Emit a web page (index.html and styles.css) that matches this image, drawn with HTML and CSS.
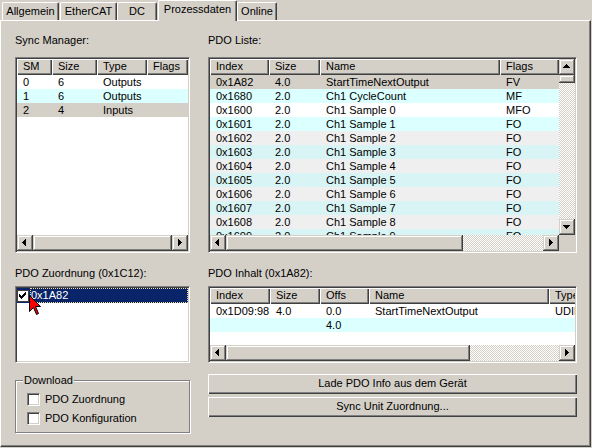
FILE: index.html
```html
<!DOCTYPE html>
<html>
<head>
<meta charset="utf-8">
<title>Prozessdaten</title>
<link rel="stylesheet" href="styles.css">
</head>
<body>
<div class="tabs">
  <div class="tab tab-allg">Allgemein</div>
  <div class="tab tab-ecat">EtherCAT</div>
  <div class="tab tab-dc">DC</div>
  <div class="tab tab-proz active">Prozessdaten</div>
  <div class="tab tab-online">Online</div>
</div>
<div class="panel">
  <div class="col col-left">
    <div class="label">Sync Manager:</div>
    <div class="lv lv-sm">
      <div class="lv-main">
        <div class="hrow sm-cols">
          <div class="hc">SM</div><div class="hc">Size</div><div class="hc">Type</div><div class="hc">Flags</div>
        </div>
        <div class="lv-body">
          <div class="row sm-cols r-white"><div class="c">0</div><div class="c">6</div><div class="c">Outputs</div><div class="c"></div></div>
          <div class="row sm-cols r-cyan"><div class="c">1</div><div class="c">6</div><div class="c">Outputs</div><div class="c"></div></div>
          <div class="row sm-cols r-gray"><div class="c">2</div><div class="c">4</div><div class="c">Inputs</div><div class="c"></div></div>
        </div>
      </div>
      <div class="hscroll">
        <div class="sbtn"><svg width="16" height="16" viewBox="0 0 16 16"><path d="M5 7h1v1H5z M6 6h1v3H6z M7 5h1v5H7z M8 4h1v7H8z"/></svg></div>
        <div class="thumb thumb-sm"></div>
        <div class="track"></div>
        <div class="sbtn"><svg width="16" height="16" viewBox="0 0 16 16"><path d="M6 4h1v7H6z M7 5h1v5H7z M8 6h1v3H8z M9 7h1v1H9z"/></svg></div>
      </div>
    </div>
    <div class="label label2">PDO Zuordnung (0x1C12):</div>
    <div class="lb">
      <div class="lb-item">
        <span class="lb-cb"><svg width="12" height="12" viewBox="0 0 12 12"><path d="M8 2h1v1H8z M7 3h2v1H7z M2 4h1v1H2z M6 4h3v1H6z M2 5h2v1H2z M5 5h3v1H5z M2 6h5v1H2z M3 7h3v1H3z M4 8h1v1H4z"/></svg></span>
        <span class="lb-text">0x1A82</span>
      </div>
      <svg class="cursor" width="13" height="22" viewBox="0 0 13 22"><path d="M0.5 0.5 L0.5 16.5 L4.5 12.5 L7.5 19.5 L9.5 18.5 L6.5 11.5 L11.5 11.5 Z" fill="#ff0000" stroke="#000" stroke-width="1" stroke-linejoin="miter"/></svg>
    </div>
    <div class="group">
      <span class="group-title">Download</span>
      <div class="chk-row"><span class="cb"></span><span>PDO Zuordnung</span></div>
      <div class="chk-row"><span class="cb"></span><span>PDO Konfiguration</span></div>
    </div>
  </div>
  <div class="col col-right">
    <div class="label">PDO Liste:</div>
    <div class="lv lv-pdo">
      <div class="pdo-grid">
        <div class="lv-main">
          <div class="hrow pdo-cols">
            <div class="hc">Index</div><div class="hc">Size</div><div class="hc">Name</div><div class="hc">Flags</div>
          </div>
          <div class="lv-body">
            <div class="row pdo-cols r-gray"><div class="c">0x1A82</div><div class="c">4.0</div><div class="c">StartTimeNextOutput</div><div class="c">FV</div></div>
            <div class="row pdo-cols r-cyan"><div class="c">0x1680</div><div class="c">2.0</div><div class="c">Ch1 CycleCount</div><div class="c">MF</div></div>
            <div class="row pdo-cols r-white"><div class="c">0x1600</div><div class="c">2.0</div><div class="c">Ch1 Sample 0</div><div class="c">MFO</div></div>
            <div class="row pdo-cols r-cyan"><div class="c">0x1601</div><div class="c">2.0</div><div class="c">Ch1 Sample 1</div><div class="c">FO</div></div>
            <div class="row pdo-cols r-light"><div class="c">0x1602</div><div class="c">2.0</div><div class="c">Ch1 Sample 2</div><div class="c">FO</div></div>
            <div class="row pdo-cols r-cyan2"><div class="c">0x1603</div><div class="c">2.0</div><div class="c">Ch1 Sample 3</div><div class="c">FO</div></div>
            <div class="row pdo-cols r-light"><div class="c">0x1604</div><div class="c">2.0</div><div class="c">Ch1 Sample 4</div><div class="c">FO</div></div>
            <div class="row pdo-cols r-cyan2"><div class="c">0x1605</div><div class="c">2.0</div><div class="c">Ch1 Sample 5</div><div class="c">FO</div></div>
            <div class="row pdo-cols r-light"><div class="c">0x1606</div><div class="c">2.0</div><div class="c">Ch1 Sample 6</div><div class="c">FO</div></div>
            <div class="row pdo-cols r-cyan2"><div class="c">0x1607</div><div class="c">2.0</div><div class="c">Ch1 Sample 7</div><div class="c">FO</div></div>
            <div class="row pdo-cols r-light"><div class="c">0x1608</div><div class="c">2.0</div><div class="c">Ch1 Sample 8</div><div class="c">FO</div></div>
            <div class="row pdo-cols r-cyan2"><div class="c">0x1609</div><div class="c">2.0</div><div class="c">Ch1 Sample 9</div><div class="c">FO</div></div>
          </div>
        </div>
        <div class="vscroll">
          <div class="sbtn"><svg width="16" height="16" viewBox="0 0 16 16"><path d="M7 5h1v1H7z M6 6h3v1H6z M5 7h5v1H5z M4 8h7v1H4z"/></svg></div>
          <div class="thumb thumb-v"></div>
          <div class="track"></div>
          <div class="sbtn"><svg width="16" height="16" viewBox="0 0 16 16"><path d="M4 6h7v1H4z M5 7h5v1H5z M6 8h3v1H6z M7 9h1v1H7z"/></svg></div>
        </div>
        <div class="hscroll">
          <div class="sbtn"><svg width="16" height="16" viewBox="0 0 16 16"><path d="M5 7h1v1H5z M6 6h1v3H6z M7 5h1v5H7z M8 4h1v7H8z"/></svg></div>
          <div class="thumb thumb-pdo"></div>
          <div class="track"></div>
          <div class="sbtn"><svg width="16" height="16" viewBox="0 0 16 16"><path d="M6 4h1v7H6z M7 5h1v5H7z M8 6h1v3H8z M9 7h1v1H9z"/></svg></div>
        </div>
        <div class="corner"></div>
      </div>
    </div>
    <div class="label label2">PDO Inhalt (0x1A82):</div>
    <div class="lv lv-inh">
      <div class="lv-main">
        <div class="hrow inh-cols">
          <div class="hc">Index</div><div class="hc">Size</div><div class="hc">Offs</div><div class="hc">Name</div><div class="hc">Type</div>
        </div>
        <div class="lv-body">
          <div class="row inh-cols r-white"><div class="c">0x1D09:98</div><div class="c">4.0</div><div class="c">0.0</div><div class="c">StartTimeNextOutput</div><div class="c">UDINT</div></div>
          <div class="row inh-cols r-cyan"><div class="c"></div><div class="c"></div><div class="c">4.0</div><div class="c"></div><div class="c"></div></div>
        </div>
      </div>
      <div class="hscroll">
        <div class="sbtn"><svg width="16" height="16" viewBox="0 0 16 16"><path d="M5 7h1v1H5z M6 6h1v3H6z M7 5h1v5H7z M8 4h1v7H8z"/></svg></div>
        <div class="thumb thumb-inh"></div>
        <div class="track"></div>
        <div class="sbtn"><svg width="16" height="16" viewBox="0 0 16 16"><path d="M6 4h1v7H6z M7 5h1v5H7z M8 6h1v3H8z M9 7h1v1H9z"/></svg></div>
      </div>
    </div>
    <div class="btn btn-first">Lade PDO Info aus dem Gerät</div>
    <div class="btn btn-second">Sync Unit Zuordnung...</div>
  </div>
</div>
</body>
</html>
```
FILE: styles.css
```css
* { box-sizing: border-box; }
html, body { margin: 0; padding: 0; }
body {
  background: #d4d0c8;
  font-family: "Liberation Sans", Arial, sans-serif;
  font-size: 11px;
  color: #000;
  width: 592px;
  height: 448px;
  overflow: hidden;
}
svg { display: block; }

/* Tabs */
.tabs {
  display: flex;
  align-items: flex-end;
  height: 20px;
  padding-left: 2px;
  position: relative;
  z-index: 1;
}
.tab {
  height: 18px;
  border-left: 1px solid #fff;
  border-top: 1px solid #fff;
  border-right: 1px solid #404040;
  box-shadow: inset -1px 0 #808080;
  border-radius: 2px 2px 0 0;
  text-align: center;
  line-height: 17px;
  background: #d4d0c8;
  white-space: nowrap;
}
.tab-allg { width: 57px; }
.tab-ecat { width: 57px; margin-left: 1px; }
.tab-dc { width: 40px; }
.tab-proz { width: 79px; margin-left: 1px; }
.tab-online { width: 40px; }
.tab.active {
  height: 21px;
  margin-bottom: -1px;
  line-height: 16px;
  position: relative;
}

/* Panel */
.panel {
  width: 591px;
  height: 427px;
  border-top: 1px solid #fff;
  border-left: 1px solid #fff;
  border-right: 1px solid #404040;
  border-bottom: 1px solid #404040;
  box-shadow: inset -1px -1px #808080;
  display: flex;
  gap: 18px;
  padding: 13px 0 0 14px;
}
.col { display: flex; flex-direction: column; }
.col-left { width: 175px; }
.col-right { width: 369px; }
.label { height: 13px; line-height: 13px; margin-bottom: 10px; white-space: nowrap; }
.label2 { margin-top: 14px; margin-bottom: 6px; }

/* List views */
.lv {
  background: #fff;
  border: 1px solid;
  border-color: #808080 #fff #fff #808080;
  padding: 1px;
  box-shadow: inset 1px 1px #404040, inset -1px -1px #d4d0c8;
  display: flex;
  flex-direction: column;
  overflow: hidden;
}
.lv-sm, .lv-pdo { height: 196px; }
.lv-inh { height: 77px; }
.lv-main { flex: 1; overflow: hidden; display: flex; flex-direction: column; min-height: 0; }
.lv-body { flex: 1; overflow: hidden; }
.hrow { display: grid; height: 16px; flex: none; }
.hc {
  background: #d4d0c8;
  box-shadow: inset 1px 1px #fff, inset -1px -1px #404040, inset -2px -2px #808080;
  padding-left: 6px;
  line-height: 15px;
  white-space: nowrap;
  overflow: hidden;
}
.row { display: grid; height: 14px; line-height: 14px; }
.c { padding-left: 6px; white-space: nowrap; overflow: hidden; }
.sm-cols { grid-template-columns: 35px 45px 50px 41px; }
.pdo-cols { grid-template-columns: 59px 51px 180px 59px; }
.inh-cols { grid-template-columns: 60px 50px 49px 180px 60px; }
.r-white { background: #fff; }
.r-cyan { background: #dcffff; }
.r-cyan2 { background: #d8f4f4; }
.r-gray { background: #d4d0c8; }
.r-light { background: #efefef; }

.pdo-grid {
  flex: 1;
  display: grid;
  grid-template-columns: 1fr 16px;
  grid-template-rows: 1fr 16px;
  min-height: 0;
}

/* Scrollbars */
.hscroll { display: flex; height: 16px; flex: none; }
.vscroll { display: flex; flex-direction: column; width: 16px; }
.sbtn, .thumb {
  width: 16px;
  height: 16px;
  flex: none;
  background: #d4d0c8;
  box-shadow: inset -1px -1px #404040, inset 1px 1px #d4d0c8, inset -2px -2px #808080, inset 2px 2px #fff;
}
.track {
  flex: 1;
  background-color: #fff;
  background-image: repeating-conic-gradient(#d4d0c8 0 25%, #fff 0 50%);
  background-size: 2px 2px;
}
.thumb-sm { width: 139px; }
.thumb-pdo { width: 237px; }
.thumb-inh { width: 244px; }
.thumb-v { height: 8px; }
.corner { background: #d4d0c8; }

/* List box */
.lb {
  position: relative;
  height: 77px;
  background: #fff;
  border: 1px solid;
  border-color: #808080 #fff #fff #808080;
  padding: 1px;
  box-shadow: inset 1px 1px #404040, inset -1px -1px #d4d0c8;
}
.lb-item {
  height: 15px;
  background: #0a246a;
  color: #fff;
  display: flex;
  align-items: center;
}
.lb-cb {
  width: 12px;
  height: 12px;
  margin: 0 1px 0 0;
  background: #fff;
  border: 1px solid #404040;
  flex: none;
  position: relative;
}
.lb-cb svg { position: absolute; left: -1px; top: -1px; }
.lb-text {
  flex: 1;
  align-self: stretch;
  line-height: 13px;
  padding-left: 0;
  border: 1px dotted #f5db95;
}
.cb {
  width: 13px;
  height: 13px;
  background: #fff;
  border: 1px solid;
  border-color: #808080 #fff #fff #808080;
  box-shadow: inset 1px 1px #404040, inset -1px -1px #d4d0c8;
  flex: none;
  position: relative;
}
.cursor { position: absolute; left: 13px; top: 8px; }

/* Group box */
.group {
  position: relative;
  margin-top: 17px;
  height: 53px;
  border: 1px solid #808080;
  box-shadow: 1px 1px 0 #fff, inset 1px 1px 0 #fff;
  padding: 12px 0 0 11px;
}
.group-title {
  position: absolute;
  left: 7px;
  top: -7px;
  padding: 0 1px;
  line-height: 13px;
  background: #d4d0c8;
}
.chk-row { display: flex; align-items: center; gap: 5px; height: 13px; margin-bottom: 6px; line-height: 13px; }

/* Buttons */
.btn {
  height: 20px;
  background: #d4d0c8;
  box-shadow: inset 1px 1px #fff, inset -1px -1px #404040, inset -2px -2px #808080;
  text-align: center;
  line-height: 19px;
}
.btn-first { margin-top: 11px; }
.btn-second { margin-top: 3px; }
```
